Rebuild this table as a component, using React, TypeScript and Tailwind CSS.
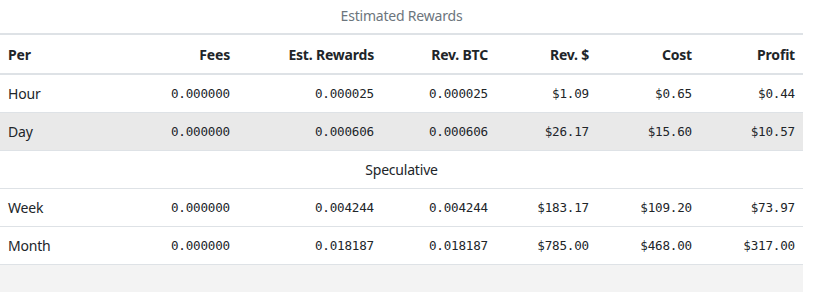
import React from "react";

interface RewardRow {
  period: string;
  fees: string;
  estRewards: string;
  revBtc: string;
  revUsd: string;
  cost: string;
  profit: string;
}

const actual: RewardRow[] = [
  { period: "Hour", fees: "0.000000", estRewards: "0.000025", revBtc: "0.000025", revUsd: "$1.09", cost: "$0.65", profit: "$0.44" },
  { period: "Day", fees: "0.000000", estRewards: "0.000606", revBtc: "0.000606", revUsd: "$26.17", cost: "$15.60", profit: "$10.57" },
];

const speculative: RewardRow[] = [
  { period: "Week", fees: "0.000000", estRewards: "0.004244", revBtc: "0.004244", revUsd: "$183.17", cost: "$109.20", profit: "$73.97" },
  { period: "Month", fees: "0.000000", estRewards: "0.018187", revBtc: "0.018187", revUsd: "$785.00", cost: "$468.00", profit: "$317.00" },
];

const headers = ["Fees", "Est. Rewards", "Rev. BTC", "Rev. $", "Cost", "Profit"];

const num = "px-2 py-2 text-right font-['DejaVu_Sans_Mono',monospace] text-[12.6px]";

const Row = ({ row, shaded }: { row: RewardRow; shaded?: boolean }) => (
  <tr className={`border-b border-[#dee2e6] h-[38px] ${shaded ? "bg-[#e9e9e9]" : ""}`}>
    <td className="px-2 py-2 text-left">{row.period}</td>
    <td className={num}>{row.fees}</td>
    <td className={num}>{row.estRewards}</td>
    <td className={num}>{row.revBtc}</td>
    <td className={num}>{row.revUsd}</td>
    <td className={num}>{row.cost}</td>
    <td className={num}>{row.profit}</td>
  </tr>
);

export default function App() {
  return (
    <div className="w-[835px] h-[292px] bg-white">
      <div className="w-[803px] h-full bg-[#f3f3f3]">
        <div className="bg-white text-[#212529] text-[14px] leading-[21px] tracking-[-0.2px] font-['Noto_Sans',sans-serif]">
          <div className="h-[33px] pt-[5px] text-center text-[#6c757d]">Estimated Rewards</div>
          <table className="w-full table-fixed border-collapse">
            <colgroup>
              <col className="w-[120px]" />
              <col className="w-[118px]" />
              <col className="w-[144px]" />
              <col className="w-[114px]" />
              <col className="w-[101px]" />
              <col className="w-[103px]" />
              <col className="w-[103px]" />
            </colgroup>
            <thead>
              <tr className="border-t-2 border-b-2 border-[#dee2e6] h-[40px]">
                <th className="px-2 py-2 text-left font-bold">Per</th>
                {headers.map((h) => (
                  <th key={h} className="px-2 py-2 text-right font-bold">
                    {h}
                  </th>
                ))}
              </tr>
            </thead>
            <tbody>
              {actual.map((r, i) => (
                <Row key={r.period} row={r} shaded={i === 1} />
              ))}
              <tr className="border-b border-[#dee2e6] h-[38px]">
                <td colSpan={7} className="px-2 py-2 text-center">
                  Speculative
                </td>
              </tr>
              {speculative.map((r) => (
                <Row key={r.period} row={r} />
              ))}
            </tbody>
          </table>
        </div>
      </div>
    </div>
  );
}
